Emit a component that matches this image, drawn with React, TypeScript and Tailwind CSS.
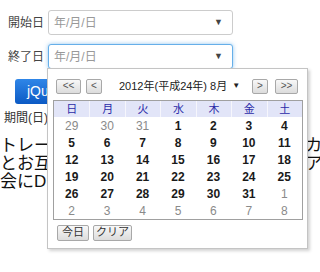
import React from "react";

const font = "font-['Liberation_Sans','Noto_Sans_CJK_JP',sans-serif]";

type Day = { n: number; out?: boolean };

const weeks: Day[][] = [
  [{ n: 29, out: true }, { n: 30, out: true }, { n: 31, out: true }, { n: 1 }, { n: 2 }, { n: 3 }, { n: 4 }],
  [{ n: 5 }, { n: 6 }, { n: 7 }, { n: 8 }, { n: 9 }, { n: 10 }, { n: 11 }],
  [{ n: 12 }, { n: 13 }, { n: 14 }, { n: 15 }, { n: 16 }, { n: 17 }, { n: 18 }],
  [{ n: 19 }, { n: 20 }, { n: 21 }, { n: 22 }, { n: 23 }, { n: 24 }, { n: 25 }],
  [{ n: 26 }, { n: 27 }, { n: 28 }, { n: 29 }, { n: 30 }, { n: 31 }, { n: 1, out: true }],
  [{ n: 2, out: true }, { n: 3, out: true }, { n: 4, out: true }, { n: 5, out: true }, { n: 6, out: true }, { n: 7, out: true }, { n: 8, out: true }],
];

const weekdays = ["日", "月", "火", "水", "木", "金", "土"];

function NavButton({ label, w }: { label: string; w: string }) {
  return (
    <button
      className={`${w} h-[15px] flex items-center justify-center rounded-[2px] border border-[#a8a8a8] bg-gradient-to-b from-[#f8f8f8] to-[#dcdcdc] text-[10px] leading-none text-[#555]`}>
      {label}
    </button>
  );
}

function DateInput({ focused }: { focused?: boolean }) {
  return (
    <div
      className={`w-[185px] h-[25px] flex items-center justify-between rounded-[3px] border bg-white pl-[5px] pr-[9px] ${
        focused
          ? "border-[#66afe9] shadow-[0_0_4px_rgba(102,175,233,0.7)]"
          : "border-[#cccccc]"
      }`}>
      <span className="text-[12px] text-[#999]">年/月/日</span>
      <span className="text-[9px] text-[#444]">▼</span>
    </div>
  );
}

export default function App() {
  return (
    <div className={`relative w-[320px] h-[272px] overflow-hidden bg-white text-[#333] ${font}`}>
      {/* Form */}
      <div className="pt-[10px]">
        <div className="flex items-center">
          <span className="w-[48px] pl-[8px] text-[12px] text-[#444]">開始日</span>
          <DateInput />
        </div>
        <div className="flex items-center mt-[9px]">
          <span className="w-[48px] pl-[8px] text-[12px] text-[#444]">終了日</span>
          <DateInput focused />
        </div>

        <button className="mt-[10px] ml-[15px] h-[25px] w-[90px] rounded-[3px] bg-gradient-to-b from-[#2f86e8] to-[#0b5ac4] pl-[12px] text-left text-[14px] text-white">
          jQuery
        </button>

        <div className="mt-[5px] pl-[4px] text-[12px] text-[#333]">期間(日)</div>

        <div className="mt-[10px] text-[17px] leading-[18px] text-[#111] whitespace-nowrap">
          <div>トレーニングの記録を残して共有できるカ</div>
          <div>とお互いに励まし合えるような仕組みのア</div>
          <div>会にDBを使って</div>
        </div>
      </div>

      {/* Calendar popup */}
      <div className="absolute left-[47px] top-[68px] w-[261px] h-[181px] border border-[#c4c4c4] bg-white shadow-[2px_2px_3px_rgba(0,0,0,0.18)] px-[5px]">
        <div className="mt-[9px] flex items-center">
          <div className="ml-[3px] flex gap-[5px]">
            <NavButton label="<<" w="w-[25px]" />
            <NavButton label="<" w="w-[16px]" />
          </div>
          <div className="ml-[17px] flex-1 flex items-center text-[11px] text-[#222]">
            <span>2012年(平成24年) 8月</span>
            <span className="ml-[5px] text-[8px]">▼</span>
          </div>
          <div className="mr-[4px] flex gap-[7px]">
            <NavButton label=">" w="w-[16px]" />
            <NavButton label=">>" w="w-[23px]" />
          </div>
        </div>

        <div className="mt-[5px] w-[250px] border border-[#a0a0a0]">
          <div className="grid grid-cols-7 h-[16px] bg-[#e2e5f8]">
            {weekdays.map((d, i) => (
              <div
                key={d}
                className={`flex items-center justify-center text-[11px] text-[#2b2ba8] ${
                  i > 0 ? "border-l border-[#f6f6fc]" : ""
                }`}>
                {d}
              </div>
            ))}
          </div>
          {weeks.map((week, wi) => (
            <div key={wi} className="grid grid-cols-7 h-[17px]">
              {week.map((d, di) => (
                <div
                  key={di}
                  className={`flex items-center justify-center text-[12px] ${
                    d.out ? "text-[#8a8a8a]" : "font-bold text-[#1a1a1a]"
                  }`}>
                  {d.n}
                </div>
              ))}
            </div>
          ))}
        </div>

        <div className="mt-[5px] ml-[4px] flex gap-[4px]">
          <button className="w-[32px] h-[16px] flex items-center justify-center rounded-[2px] border border-[#a8a8a8] bg-gradient-to-b from-[#f8f8f8] to-[#dcdcdc] text-[11px] leading-none text-[#333]">
            今日
          </button>
          <button className="w-[39px] h-[16px] flex items-center justify-center rounded-[2px] border border-[#a8a8a8] bg-gradient-to-b from-[#f8f8f8] to-[#dcdcdc] text-[11px] leading-none text-[#333]">
            クリア
          </button>
        </div>
      </div>
    </div>
  );
}
